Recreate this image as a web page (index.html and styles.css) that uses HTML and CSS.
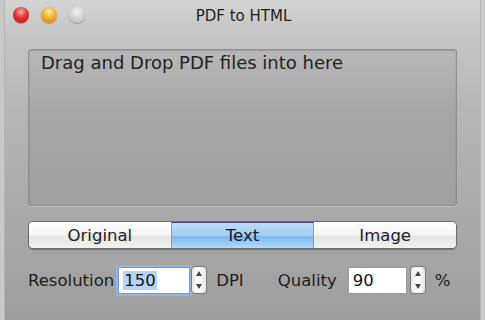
FILE: index.html
```html
<!DOCTYPE html>
<html lang="en">
<head>
  <meta charset="UTF-8" />
  <title>PDF to HTML</title>
  <link rel="stylesheet" href="styles.css">
</head>
<body>
  <div class="window">
    <div class="titlebar">
      <div class="lights">
        <span class="light red"></span>
        <span class="light orange"></span>
        <span class="light gray"></span>
      </div>
      <div class="title">PDF to HTML</div>
    </div>
    <div class="content">
      <div class="dropzone">Drag and Drop PDF files into here</div>
      <div class="segmented">
        <div class="segment">Original</div>
        <div class="segment active">Text</div>
        <div class="segment">Image</div>
      </div>
      <div class="options">
        <div class="option">
          <span class="label">Resolution</span>
          <span class="field focused"><span class="selected">150</span></span>
          <span class="stepper"><span class="up"></span><span class="down"></span></span>
          <span class="unit">DPI</span>
        </div>
        <div class="option">
          <span class="label">Quality</span>
          <span class="field quality">90</span>
          <span class="stepper"><span class="up"></span><span class="down"></span></span>
          <span class="unit">%</span>
        </div>
      </div>
    </div>
  </div>
</body>
</html>
```

FILE: styles.css
```css
body {
  margin: 0;
  width: 485px;
  height: 320px;
  overflow: hidden;
  font-family: 'DejaVu Sans', 'Liberation Sans', sans-serif;
  background: #c8c8c8;
  color: #1c1c1c;
}
.window {
  height: 320px;
  margin-left: 4px;
  margin-right: 4px;
  border-left: 1px solid #b4b4b4;
  border-right: 1px solid #b4b4b4;
  background: linear-gradient(#d4d4d4 0px, #c6c6c6 30px, #b4b4b4 120px, #9e9e9e 320px);
  display: flex;
  flex-direction: column;
}
.titlebar {
  height: 31px;
  position: relative;
  display: flex;
  align-items: center;
  justify-content: center;
}
.lights {
  position: absolute;
  left: 8px;
  top: 7px;
  display: flex;
  gap: 12px;
}
.light {
  width: 16px;
  height: 16px;
  border-radius: 50%;
  box-shadow: 0 1px 1px rgba(0, 0, 0, 0.25);
}
.red {
  background: radial-gradient(circle at 50% 30%, #f7b0b0 0, #e23030 45%, #b01515 100%);
}
.orange {
  background: radial-gradient(circle at 50% 30%, #fdeaa8 0, #f4b02a 45%, #d07c0c 100%);
}
.gray {
  background: radial-gradient(circle at 50% 30%, #f2f2f2 0, #d2d2d2 50%, #b6b6b6 100%);
}
.title {
  font-size: 15px;
  color: #1e1e1e;
  margin-left: 2px;
}
.content {
  padding: 18px 23px 0 23px;
  display: flex;
  flex-direction: column;
}
.dropzone {
  height: 157px;
  border: 1px solid #8e8e8e;
  border-radius: 3px;
  background: linear-gradient(#b8b8b8, #a6a6a6 40%, #a0a0a0);
  box-shadow: inset 0 1px 2px rgba(0, 0, 0, 0.15), 0 1px 0 rgba(255, 255, 255, 0.25);
  font-size: 18px;
  padding: 2px 12px;
  box-sizing: border-box;
  color: #222;
}
.segmented {
  margin-top: 15px;
  height: 26px;
  display: flex;
  border: 1px solid #6a6a6a;
  border-radius: 5px;
  overflow: hidden;
  box-shadow: 0 1px 1px rgba(0, 0, 0, 0.3);
}
.segment {
  flex: 1;
  display: flex;
  align-items: center;
  justify-content: center;
  font-size: 16.5px;
  background: linear-gradient(#ffffff, #f4f4f4 50%, #e4e4e4 55%, #f2f2f2);
  border-right: 1px solid #9a9a9a;
  color: #202020;
}
.segment:last-child {
  border-right: none;
}
.segment.active {
  background: linear-gradient(#c0dcf8, #a2ccf4 50%, #7eb8ee 55%, #b2daff);
  border-top: 1px solid #4a4aa0;
  color: #101830;
}
.options {
  margin-top: 17px;
  display: flex;
  gap: 34px;
}
.option {
  display: flex;
  align-items: center;
}
.label {
  font-size: 16.5px;
  margin-right: 4px;
}
.field {
  width: 72px;
  height: 27px;
  box-sizing: border-box;
  background: #fff;
  border: 1px solid #9a9a9a;
  font-size: 16.5px;
  display: flex;
  align-items: center;
  padding-left: 4px;
  color: #141414;
}
.field.focused {
  border: 1px solid #6b9cd4;
  box-shadow: 0 0 0 2px #8fb6e6;
}
.field.quality {
  margin-left: 7px;
  width: 59px;
}
.selected {
  background: #b6d4f8;
  padding: 0 1px;
}
.stepper {
  width: 16px;
  height: 28px;
  margin-left: 1px;
  border: 1px solid #7a7a7a;
  border-radius: 4px;
  background: linear-gradient(90deg, #eaeaea, #ffffff 50%, #e6e6e6);
  display: flex;
  flex-direction: column;
  align-items: center;
  justify-content: space-around;
  box-sizing: border-box;
}
.quality + .stepper {
  margin-left: 3px;
}
.up, .down {
  width: 0;
  height: 0;
  border-left: 3px solid transparent;
  border-right: 3px solid transparent;
}
.up {
  border-bottom: 5px solid #444;
}
.down {
  border-top: 5px solid #444;
}
.unit {
  font-size: 16.5px;
  margin-left: 9px;
}
```
